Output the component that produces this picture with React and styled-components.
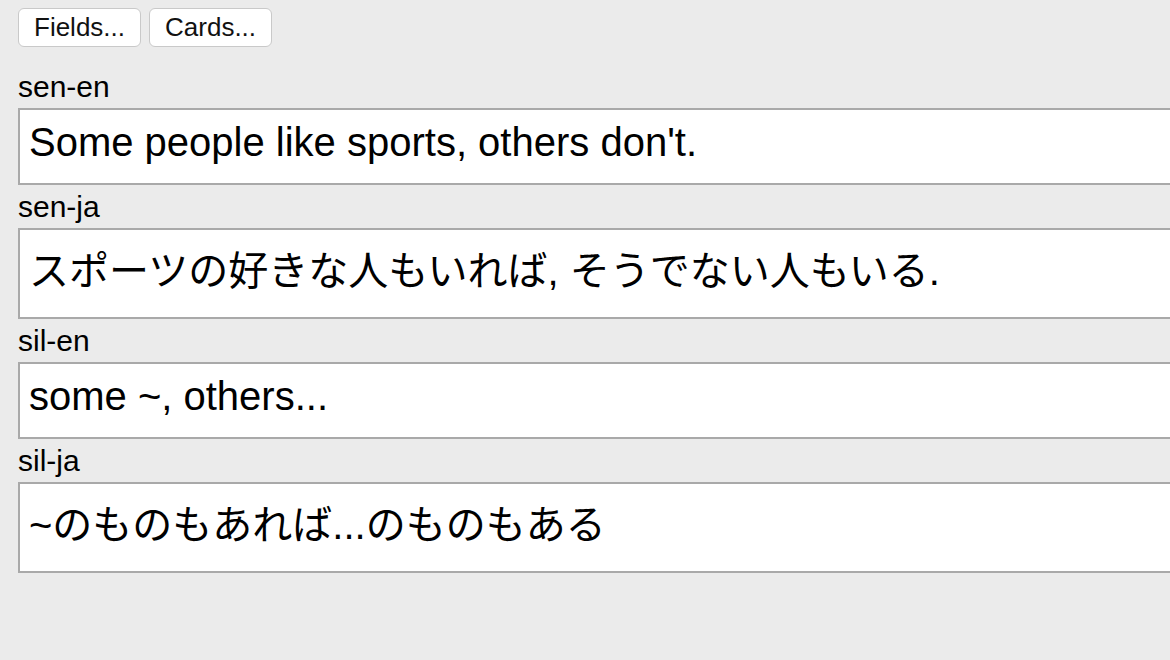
import React from 'react'
import styled, { createGlobalStyle } from 'styled-components';

const GlobalStyle = createGlobalStyle`
    html, body {
        margin: 0;
        padding: 0;
        background-color: #ebebeb;
        overflow: hidden;
    }
    body {
        font-family: "Liberation Sans", "Noto Sans CJK JP", sans-serif;
        color: #000000;
    }
`

const EditorEstilizado = styled.div`
    display: flex;
    flex-direction: column;
    padding: 8px 0 0 18px;
    min-height: 652px;
`

const ToolbarEstilizado = styled.div`
    display: flex;
    gap: 8px;
    margin-bottom: 18px;
`

const BotaoEstilizado = styled.button`
    font-family: "Liberation Sans", sans-serif;
    font-size: 26px;
    height: 39px;
    padding: 0 15px;
    background-color: #ffffff;
    color: #111111;
    border: 1px solid #c9c9c9;
    border-radius: 6px;
    line-height: 37px;
`

const CampoListaEstilizada = styled.div`
    display: flex;
    flex-direction: column;
    width: 1170px;
`

const RotuloEstilizado = styled.div`
    font-size: 30px;
    line-height: 35px;
    padding: 4px 0;
`

const CampoEstilizado = styled.div`
    background-color: #ffffff;
    border: 2px solid #a9a9a9;
    font-size: 40px;
    line-height: 46px;
    padding: ${props => props.$alto ? '18px 9px 23px' : '9px 9px 18px'};
    white-space: nowrap;
`

const campos = [
    { nome: 'sen-en', valor: "Some people like sports, others don't." },
    { nome: 'sen-ja', valor: 'スポーツの好きな人もいれば, そうでない人もいる.', cjk: true },
    { nome: 'sil-en', valor: 'some ~, others...' },
    { nome: 'sil-ja', valor: '~のものもあれば...のものもある', cjk: true },
]

const App = () => {
  return (
    <>
        <GlobalStyle />
        <EditorEstilizado>
            <ToolbarEstilizado>
                <BotaoEstilizado>Fields...</BotaoEstilizado>
                <BotaoEstilizado>Cards...</BotaoEstilizado>
            </ToolbarEstilizado>
            <CampoListaEstilizada>
                {campos.map(campo => (
                    <React.Fragment key={campo.nome}>
                        <RotuloEstilizado>{campo.nome}</RotuloEstilizado>
                        <CampoEstilizado $alto={campo.cjk}>{campo.valor}</CampoEstilizado>
                    </React.Fragment>
                ))}
            </CampoListaEstilizada>
        </EditorEstilizado>
    </>
  )
}

export default App
